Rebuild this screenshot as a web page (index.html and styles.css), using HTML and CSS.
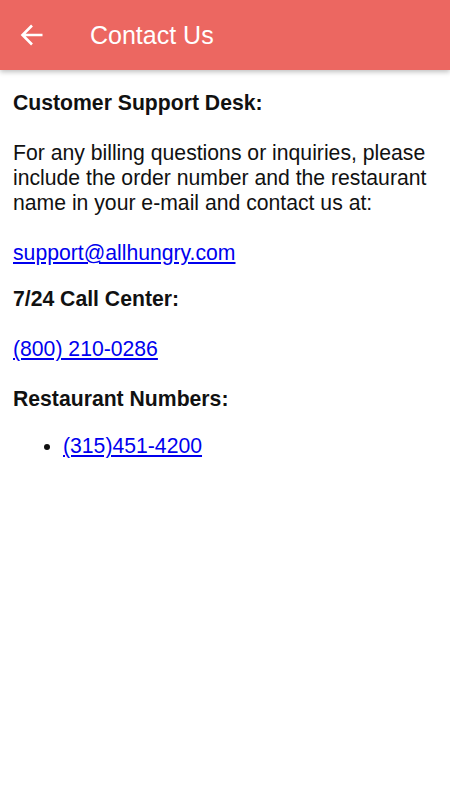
FILE: index.html
```html
<!DOCTYPE html>
<html lang="en">
<head>
    <meta charset="UTF-8">
    <meta name="viewport" content="width=device-width, initial-scale=1.0">
    <title>Contact Us</title>
    <link rel="stylesheet" href="styles.css">
</head>
<body>
    <header class="toolbar">
        <button class="back-btn" aria-label="Back">
            <svg width="24" height="24" viewBox="0 0 24 24">
                <path d="M22.5 12H3M12 2.5L2.5 12l9.5 9.5" fill="none" stroke="#fff" stroke-width="2.6"/>
            </svg>
        </button>
        <h1 class="toolbar-title">Contact Us</h1>
    </header>

    <main class="content">
        <h2 class="section-title">Customer Support Desk:</h2>
        <p class="text">For any billing questions or inquiries, please include the order number and the restaurant name in your e-mail and contact us at:</p>
        <p class="text"><a href="mailto:support@allhungry.com">support@allhungry.com</a></p>

        <h2 class="section-title call">7/24 Call Center:</h2>
        <p class="text"><a href="tel:8002100286">(800) 210-0286</a></p>

        <h2 class="section-title">Restaurant Numbers:</h2>
        <ul class="numbers">
            <li><a href="tel:3154514200">(315)451-4200</a></li>
        </ul>
    </main>
</body>
</html>
```

FILE: styles.css
```css
body {
    margin: 0;
    font-family: "Liberation Sans", Arial, sans-serif;
    color: #111;
    background-color: #fff;
}
.toolbar {
    display: flex;
    align-items: center;
    height: 70px;
    background-color: #ec6761;
    box-shadow: 0 2px 5px rgba(0, 0, 0, 0.25);
}
.back-btn {
    display: flex;
    align-items: center;
    justify-content: center;
    width: 62px;
    height: 70px;
    padding: 0 0 0 2px;
    background: none;
    border: none;
}
.back-btn svg {
    width: 24px;
    height: 24px;
}
.toolbar-title {
    margin: 0 0 0 28px;
    font-size: 25px;
    font-weight: normal;
    color: #fff;
}
.content {
    padding: 20px 13px;
    font-size: 21.2px;
    line-height: 25px;
}
.section-title {
    margin: 0 0 25px;
    font-size: 21.2px;
    font-weight: bold;
}
.text {
    margin: 0 0 25px;
}
.content a {
    color: #0000ee;
}
.call {
    margin-top: -4px;
}
.numbers {
    margin: -3px 0 0;
    padding-left: 50px;
}
```
